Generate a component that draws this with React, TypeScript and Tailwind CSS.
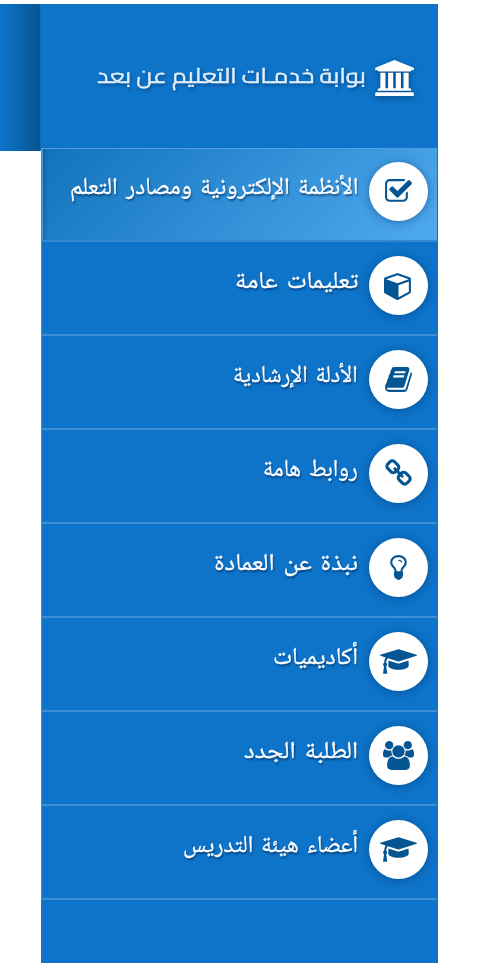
import { useLayoutEffect, useRef, useState } from 'react'
import clsx from 'clsx'

type Icon = { viewBox: string; className: string; path: string }

const university: Icon = {
  viewBox: '0 0 1920 1792',
  className: 'mt-px h-[36px] w-[39px]',
  path: 'M960 0l960 384v128h-128q0 26-20.5 45t-48.5 19h-1526q-28 0-48.5-19t-20.5-45h-128v-128zm-704 640h256v768h128v-768h256v768h128v-768h256v768h128v-768h256v768h59q28 0 48.5 19t20.5 45v64h-1664v-64q0-26 20.5-45t48.5-19h59v-768zm1595 960q28 0 48.5 19t20.5 45v128h-1920v-128q0-26 20.5-45t48.5-19h1782z',
}

const checkSquare: Icon = {
  viewBox: '0 0 1792 1792',
  className: 'size-[29px]',
  path: 'M1472 930v318q0 119-84.5 203.5t-203.5 84.5h-832q-119 0-203.5-84.5t-84.5-203.5v-832q0-119 84.5-203.5t203.5-84.5h832q63 0 117 25 15 7 18 23 3 17-9 29l-49 49q-10 10-23 10-3 0-9-2-23-6-45-6h-832q-66 0-113 47t-47 113v832q0 66 47 113t113 47h832q66 0 113-47t47-113v-254q0-13 9-22l64-64q10-10 23-10 6 0 12 3 20 8 20 29zm231-489l-814 814q-24 24-57 24t-57-24l-430-430q-24-24-24-57t24-57l110-110q24-24 57-24t57 24l263 263 647-647q24-24 57-24t57 24l110 110q24 24 24 57t-24 57z',
}

const cube: Icon = {
  viewBox: '0 0 1792 1792',
  className: 'size-[29px]',
  path: 'M896 1629l640-349v-636l-640 233v752zm-64-865l698-254-698-254-698 254zm832-252v768q0 35-18 65t-49 47l-704 384q-28 16-61 16t-61-16l-704-384q-31-17-49-47t-18-65v-768q0-40 23-73t61-47l704-256q22-8 44-8t44 8l704 256q38 14 61 47t23 73z',
}

const book: Icon = {
  viewBox: '0 0 1792 1792',
  className: 'size-[29px]',
  path: 'M1703 478q40 57 18 129l-275 906q-19 64-76.5 107.5t-122.5 43.5h-923q-77 0-148.5-53.5t-99.5-131.5q-24-67-2-127 0-4 3-27t4-37q1-8-3-21.5t-3-19.5q2-11 8-21t16.5-23.5 16.5-23.5q23-38 45-91.5t30-91.5q3-10 .5-30t-.5-28q3-11 17-28t17-23q21-36 42-92t25-90q1-9-2.5-32t.5-28q4-13 22-30.5t22-22.5q19-26 42.5-84.5t27.5-96.5q1-8-3-25.5t-2-26.5q2-8 9-18t18-23 17-21q8-12 16.5-30.5t15-35 16-36 19.5-32 26.5-23.5 36-11.5 47.5 5.5l-1 3q38-9 51-9h761q74 0 114 56t18 130l-274 906q-36 119-71.5 153.5t-128.5 34.5h-869q-27 0-38 15-11 16-1 43 24 70 144 70h923q29 0 56-15.5t35-41.5l300-987q7-22 5-57 38 15 59 43zm-1064 2q-4 13 2 22.5t20 9.5h608q13 0 25.5-9.5t16.5-22.5l21-64q4-13-2-22.5t-20-9.5h-608q-13 0-25.5 9.5t-16.5 22.5zm-83 256q-4 13 2 22.5t20 9.5h608q13 0 25.5-9.5t16.5-22.5l21-64q4-13-2-22.5t-20-9.5h-608q-13 0-25.5 9.5t-16.5 22.5z',
}

const link: Icon = {
  viewBox: '0 0 1792 1792',
  className: 'size-[29px]',
  path: 'M1520 1216q0-40-28-68l-208-208q-28-28-68-28-42 0-72 32 3 3 19 18.5t21.5 21.5 15 19 13 25.5 3.5 27.5q0 40-28 68t-68 28q-15 0-27.5-3.5t-25.5-13-19-15-21.5-21.5-18.5-19q-33 31-33 73 0 40 28 68l206 207q27 27 68 27 40 0 68-26l147-146q28-28 28-67zm-703-705q0-40-28-68l-206-207q-28-28-68-28-39 0-68 27l-147 146q-28 28-28 67 0 40 28 68l208 208q27 27 68 27 42 0 72-31-3-3-19-18.5t-21.5-21.5-15-19-13-25.5-3.5-27.5q0-40 28-68t68-28q15 0 27.5 3.5t25.5 13 19 15 21.5 21.5 18.5 19q33-31 33-73zm895 705q0 120-85 203l-147 146q-83 83-203 83-121 0-204-85l-206-207q-83-83-83-203 0-123 88-209l-88-88q-86 88-208 88-120 0-204-84l-208-208q-84-84-84-204t85-203l147-146q83-83 203-83 121 0 204 85l206 207q83 83 83 203 0 123-88 209l88 88q86-88 208-88 120 0 204 84l208 208q84 84 84 204z',
}

const lightbulb: Icon = {
  viewBox: '0 0 1792 1792',
  className: 'size-[29px]',
  path: 'M1120 576q0 13-9.5 22.5t-22.5 9.5-22.5-9.5-9.5-22.5q0-46-54-71t-106-25q-13 0-22.5-9.5t-9.5-22.5 9.5-22.5 22.5-9.5q50 0 99.5 16t87 54 37.5 90zm160 0q0-72-34.5-134t-90-101.5-123-62-136.5-22.5-136.5 22.5-123 62-90 101.5-34.5 134q0 101 68 180 10 11 30.5 33t30.5 33q128 153 141 298h228q13-145 141-298 10-11 30.5-33t30.5-33q68-79 68-180zm128 0q0 155-103 268-45 49-74.5 87t-59.5 95.5-34 107.5q47 28 47 82 0 37-25 64 25 27 25 64 0 52-45 81 13 23 13 47 0 46-31.5 71t-77.5 25q-20 44-60 70t-87 26-87-26-60-70q-46 0-77.5-25t-31.5-71q0-24 13-47-45-29-45-81 0-37 25-64-25-27-25-64 0-54 47-82-4-50-34-107.5t-59.5-95.5-74.5-87q-103-113-103-268 0-99 44.5-184.5t117-142 164-89 186.5-32.5 186.5 32.5 164 89 117 142 44.5 184.5z',
}

const graduationCap: Icon = {
  viewBox: '0 0 2304 1792',
  className: 'h-[29px] w-[37px]',
  path: 'M1774 836l18 316q4 69-82 128t-235 93.5-323 34.5-323-34.5-235-93.5-82-128l18-316 574 181q22 7 48 7t48-7l574-181zm530-324q0 23-22 31l-1120 352q-4 1-10 1t-10-1l-652-206q-43 34-71 111.5t-34 178.5q63 36 63 109 0 69-58 107l58 433q2 14-8 25-9 11-24 11h-192q-15 0-24-11-10-11-8-25l58-433q-58-38-58-107 0-73 65-111 11-207 98-330l-333-104q-22-8-22-31t22-31l1120-352q4-1 10-1t10 1l1120 352q22 8 22 31z',
}

const users: Icon = {
  viewBox: '0 0 1920 1792',
  className: 'h-[29px] w-[31px]',
  path: 'M593 896q-162 5-265 128h-134q-82 0-138-40.5t-56-118.5q0-353 124-353 6 0 43.5 21t97.5 42.5 119 21.5q67 0 133-23-5 37-5 66 0 139 81 256zm1071 637q0 120-73 189.5t-194 69.5h-874q-121 0-194-69.5t-73-189.5q0-53 3.5-103.5t14-109 26.5-108.5 43-97.5 62-81 85.5-53.5 111.5-20q10 0 43 21.5t73 48 107 48 135 21.5 135-21.5 107-48 73-48 43-21.5q61 0 111.5 20t85.5 53.5 62 81 43 97.5 26.5 108.5 14 109 3.5 103.5zm-1024-1277q0 106-75 181t-181 75-181-75-75-181 75-181 181-75 181 75 75 181zm704 384q0 159-112.5 271.5t-271.5 112.5-271.5-112.5-112.5-271.5 112.5-271.5 271.5-112.5 271.5 112.5 112.5 271.5zm576 225q0 78-56 118.5t-138 40.5h-134q-103-123-265-128 81-117 81-256 0-29-5-66 66 23 133 23 59 0 119-21.5t97.5-42.5 43.5-21q124 0 124 353zm-128-609q0 106-75 181t-181 75-181-75-75-181 75-181 181-75 181 75 75 181z',
}

const items = [
  { label: 'الأنظمة الإلكترونية ومصادر التعلم', width: 288, icon: checkSquare },
  { label: 'تعليمات عامة', width: 124, icon: cube },
  { label: 'الأدلة الإرشادية', width: 125, icon: book },
  { label: 'روابط هامة', width: 95, icon: link },
  { label: 'نبذة عن العمادة', width: 144, icon: lightbulb },
  { label: 'أكاديميات', width: 85, icon: graduationCap },
  { label: 'الطلبة الجدد', width: 114, icon: users },
  { label: 'أعضاء هيئة التدريس', width: 175, icon: graduationCap },
]

const Glyph = ({ icon, className }: { icon: Icon; className?: string }) => (
  <svg
    viewBox={icon.viewBox}
    fill="currentColor"
    className={clsx('shrink-0', icon.className, className)}
  >
    <path d={icon.path} />
  </svg>
)

// Scales a single line of text so that it fills the given width
const FitText = ({
  text,
  width,
  className,
}: {
  text: string
  width: number
  className: string
}) => {
  const ref = useRef<HTMLSpanElement>(null)
  const [scale, setScale] = useState(1)

  useLayoutEffect(() => {
    if (ref.current) setScale(width / ref.current.offsetWidth)
  }, [text, width])

  return (
    <span
      ref={ref}
      className={clsx('block w-max shrink-0 origin-right whitespace-nowrap', className)}
      style={{ transform: `scaleX(${scale})` }}
    >
      {text}
    </span>
  )
}

const MenuItem = ({
  item,
  active,
}: {
  item: (typeof items)[number]
  active: boolean
}) => (
  <li
    className={clsx(
      'flex h-[94px] items-start border-b-2 pr-[9px] pt-[14px]',
      active
        ? 'border-b-[#3389d2] bg-linear-[315deg,#4faaf0,#1173bb] shadow-[inset_0_1px_#559fda,inset_1px_0_#4799d8,inset_5px_0_4px_-3px_rgba(0,40,90,0.35)]'
        : 'border-b-[#408fd4]'
    )}
  >
    <a href="#" className="flex items-start gap-[11px] text-white">
      <span className="flex size-[59px] shrink-0 items-center justify-center rounded-full bg-white text-[#045591] shadow-[0_1px_10px_rgba(0,40,90,0.45)]">
        <Glyph icon={item.icon} />
      </span>
      <FitText
        text={item.label}
        width={item.width}
        className="font-['Noto_Naskh_Arabic','DejaVu_Sans',sans-serif] text-[24px] leading-[54px] [word-spacing:3px] [-webkit-text-stroke:0.3px_white] [text-shadow:1px_2px_2px_rgba(0,30,70,0.6)]"
      />
    </a>
  </li>
)

export default function App() {
  return (
    <div dir="rtl" className="flex h-[963px] w-[478px] overflow-hidden bg-white pr-10 pt-1">
      <nav className="flex w-[397px] shrink-0 flex-col bg-[#0d74c9]">
        <header className="flex h-36 shrink-0 items-start gap-[9px] pr-6 pt-[55px] text-white">
          <Glyph
            icon={university}
            className="drop-shadow-[0_2px_3px_rgba(0,30,70,0.5)]"
          />
          <FitText
            text="بوابة خدمـات التعليم عن بعد"
            width={269}
            className="font-['Cairo','Noto_Kufi_Arabic','Noto_Sans_Arabic','DejaVu_Sans',sans-serif] text-[21px] leading-[34px] text-[#e3eff9] [-webkit-text-stroke:0.4px_#e3eff9] [text-shadow:1px_2px_3px_rgba(0,30,70,0.5)]"
          />
        </header>
        <ul className="border-l border-[#3c90d6] pr-px">
          {items.map((item, index) => (
            <MenuItem key={item.label} item={item} active={index === 0} />
          ))}
        </ul>
      </nav>
      <div className="h-[147px] w-[41px] shrink-0 border-r border-[#0d6ebe] bg-linear-to-r from-[#0d74c9] from-5% to-[#075590]" />
    </div>
  )
}
